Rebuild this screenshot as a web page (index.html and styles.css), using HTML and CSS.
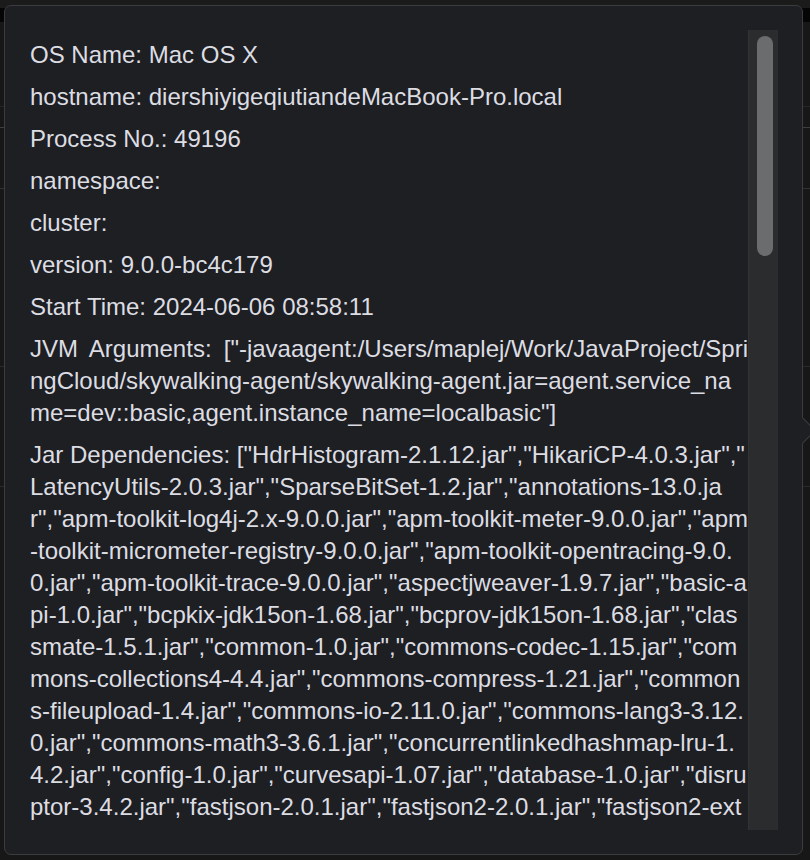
FILE: index.html
```html
<!DOCTYPE html>
<html>
<head>
<meta charset="utf-8">
<link rel="stylesheet" href="styles.css">
</head>
<body>
<div class="page">
  <div class="topbar"></div>
  <div class="header"></div>
  <div class="row r1"></div>
  <div class="row r2"></div>
  <div class="row r3"></div>
  <div class="row r4"></div>
  <div class="row r5"></div>
</div>
<div class="popover">
  <div class="arrow"></div>
  <div class="scroller">
    <div class="content">
      <p class="item">OS Name: Mac OS X</p>
      <p class="item">hostname: diershiyigeqiutiandeMacBook-Pro.local</p>
      <p class="item">Process No.: 49196</p>
      <p class="item">namespace: </p>
      <p class="item">cluster: </p>
      <p class="item">version: 9.0.0-bc4c179</p>
      <p class="item">Start Time: 2024-06-06 08:58:11</p>
      <p class="item">JVM Arguments: ["-javaagent:/Users/maplej/Work/JavaProject/SpringCloud/skywalking-agent/skywalking-agent.jar=agent.service_name=dev::basic,agent.instance_name=localbasic"]</p>
      <p class="item lines"><span class="ln">Jar Dependencies: ["HdrHistogram-2.1.12.jar","HikariCP-4.0.3.jar","</span><span class="ln">LatencyUtils-2.0.3.jar","SparseBitSet-1.2.jar","annotations-13.0.ja</span><span class="ln">r","apm-toolkit-log4j-2.x-9.0.0.jar","apm-toolkit-meter-9.0.0.jar","apm</span><span class="ln">-toolkit-micrometer-registry-9.0.0.jar","apm-toolkit-opentracing-9.0.</span><span class="ln">0.jar","apm-toolkit-trace-9.0.0.jar","aspectjweaver-1.9.7.jar","basic-a</span><span class="ln">pi-1.0.jar","bcpkix-jdk15on-1.68.jar","bcprov-jdk15on-1.68.jar","clas</span><span class="ln">smate-1.5.1.jar","common-1.0.jar","commons-codec-1.15.jar","com</span><span class="ln">mons-collections4-4.4.jar","commons-compress-1.21.jar","common</span><span class="ln">s-fileupload-1.4.jar","commons-io-2.11.0.jar","commons-lang3-3.12.</span><span class="ln">0.jar","commons-math3-3.6.1.jar","concurrentlinkedhashmap-lru-1.</span><span class="ln">4.2.jar","config-1.0.jar","curvesapi-1.07.jar","database-1.0.jar","disru</span><span class="ln">ptor-3.4.2.jar","fastjson-2.0.1.jar","fastjson2-2.0.1.jar","fastjson2-ext</span><span class="ln">ension-2.0.1.jar","fastjson2-extension-spring5-2.0.1.jar","guava-31.1</span><span class="ln">-jre.jar","jackson-annotations-2.13.3.jar"]</span></p>
    </div>
    <div class="track"><div class="thumb"></div></div>
  </div>
</div>
</body>
</html>
```
FILE: styles.css
```css
html, body {
  margin: 0;
  padding: 0;
  width: 810px;
  height: 860px;
  overflow: hidden;
  background: #171717;
  font-family: "Liberation Sans", Arial, Helvetica, sans-serif;
}

.page {
  display: flex;
  flex-direction: column;
}

.topbar {
  height: 8px;
  background: #1b1b1b;
}

.header {
  height: 14px;
  background: #050505;
}

.row {
  border-bottom: 1px solid #2a2a2a;
}

.r1 { height: 84px; border-bottom-color: #262626; }
.r2 { height: 20px; border-bottom-color: #3e3e3e; }
.r3 { height: 60px; border-bottom-color: #323232; }
.r4 { height: 177px; }
.r5 { height: 119px; }

.popover {
  position: absolute;
  left: 4px;
  top: 5px;
  width: 799px;
  height: 850px;
  box-sizing: border-box;
  padding: 24px 24px 24px 25px;
  background: #1e1f22;
  border: 1px solid #3b3c3f;
  border-radius: 7px;
}

.arrow {
  position: absolute;
  right: -10px;
  top: 415px;
  width: 18px;
  height: 18px;
  background: #1e1f22;
  border-top: 1px solid #3b3c3f;
  border-right: 1px solid #3b3c3f;
  transform: rotate(45deg);
}

.scroller {
  display: flex;
  height: 800px;
}

.content {
  flex: 1;
  min-width: 0;
  overflow: hidden;
  padding-top: 9px;
  color: #dcdde3;
  font-size: 24px;
  line-height: 32px;
  word-break: break-all;
  line-break: anywhere;
  text-align: justify;
}

.item {
  margin: 0 0 10px 0;
}

.lines .ln {
  display: block;
  white-space: nowrap;
  text-align: left;
}

.track {
  width: 30px;
  flex: none;
  box-sizing: border-box;
  padding: 6px 6px 0 8px;
  background: #2b2c2e;
  border-left: 1px solid #323335;
}

.thumb {
  width: 16px;
  height: 220px;
  border-radius: 8px;
  background: #6b6c6e;
}
```
